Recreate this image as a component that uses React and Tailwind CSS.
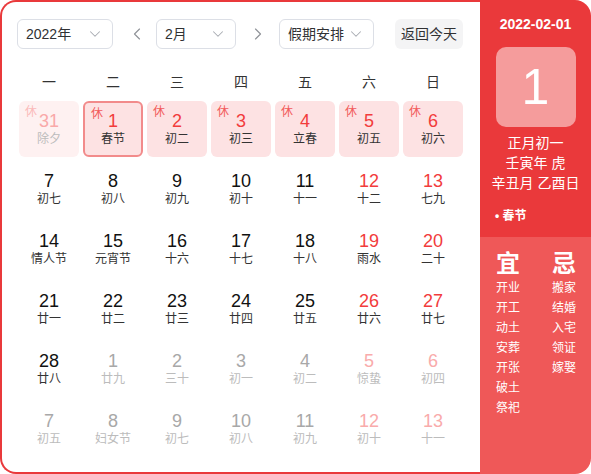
import { ChevronDown, ChevronLeft, ChevronRight } from 'lucide-react'

const font = { fontFamily: '"Liberation Sans", "Noto Sans CJK SC", sans-serif' }

// kind: faded (prev month holiday), hol (holiday), sel (holiday + selected), norm, next
const days = [
  { n: '31', l: '除夕', k: 'faded', rest: true },
  { n: '1', l: '春节', k: 'sel', rest: true },
  { n: '2', l: '初二', k: 'hol', rest: true },
  { n: '3', l: '初三', k: 'hol', rest: true },
  { n: '4', l: '立春', k: 'hol', rest: true },
  { n: '5', l: '初五', k: 'hol', rest: true },
  { n: '6', l: '初六', k: 'hol', rest: true },
  { n: '7', l: '初七' }, { n: '8', l: '初八' }, { n: '9', l: '初九' }, { n: '10', l: '初十' },
  { n: '11', l: '十一' }, { n: '12', l: '十二' }, { n: '13', l: '七九' },
  { n: '14', l: '情人节' }, { n: '15', l: '元宵节' }, { n: '16', l: '十六' }, { n: '17', l: '十七' },
  { n: '18', l: '十八' }, { n: '19', l: '雨水' }, { n: '20', l: '二十' },
  { n: '21', l: '廿一' }, { n: '22', l: '廿二' }, { n: '23', l: '廿三' }, { n: '24', l: '廿四' },
  { n: '25', l: '廿五' }, { n: '26', l: '廿六' }, { n: '27', l: '廿七' },
  { n: '28', l: '廿八' },
  { n: '1', l: '廿九', k: 'next' }, { n: '2', l: '三十', k: 'next' }, { n: '3', l: '初一', k: 'next' },
  { n: '4', l: '初二', k: 'next' }, { n: '5', l: '惊蛰', k: 'next' }, { n: '6', l: '初四', k: 'next' },
  { n: '7', l: '初五', k: 'next' }, { n: '8', l: '妇女节', k: 'next' }, { n: '9', l: '初七', k: 'next' },
  { n: '10', l: '初八', k: 'next' }, { n: '11', l: '初九', k: 'next' }, { n: '12', l: '初十', k: 'next' },
  { n: '13', l: '十一', k: 'next' },
]

const yi = ['开业', '开工', '动土', '安葬', '开张', '破土', '祭祀']
const ji = ['搬家', '结婚', '入宅', '领证', '嫁娶']

function Select({ label, w }) {
  return (
    <div className={`${w} h-[30px] border border-[#dcdfe6] rounded-[6px] flex items-center justify-between pl-[8px] pr-[8px]`}>
      <span className="text-[14px] text-[#303133]">{label}</span>
      <ChevronDown size={18} strokeWidth={1.4} className="text-[#a8abb2]" />
    </div>
  )
}

function Cell({ d, i }) {
  const weekend = i % 7 >= 5
  let box = ''
  let num = 'text-[#111]'
  let lun = 'text-[#333]'
  if (d.k === 'faded') {
    box = 'bg-[#fef1f1]'
    num = 'text-[#f9a9a9]'
    lun = 'text-[#bcbcbc]'
  } else if (d.k === 'hol') {
    box = 'bg-[#fde2e3]'
    num = 'text-[#f23c3c]'
  } else if (d.k === 'sel') {
    box = 'bg-[#fde2e3] border-2 border-[#f28b8b]'
    num = 'text-[#f23c3c]'
  } else if (d.k === 'next') {
    num = weekend ? 'text-[#f9abab]' : 'text-[#a8a8a8]'
    lun = 'text-[#bcbcbc]'
  } else if (weekend) {
    num = 'text-[#f23c3c]'
  }
  return (
    <div className={`relative h-[56px] mx-[2px] rounded-[6px] flex flex-col items-center justify-center ${box}`}>
      {d.rest && (
        <span className={`absolute left-[6px] top-[3px] text-[12px] leading-[16px] ${d.k === 'faded' ? 'text-[#fbbaba]' : 'text-[#f25a5a]'}`}>休</span>
      )}
      <span className={`text-[18px] leading-[20px] ${num}`}>{d.n}</span>
      <span className={`text-[12px] leading-[16px] ${lun}`}>{d.l}</span>
    </div>
  )
}

export default function App() {
  return (
    <div className="w-[591px] h-[474px] flex bg-white" style={font}>
      {/* left calendar */}
      <div className="w-[480px] h-full border-2 border-r-0 border-[#e9393b] rounded-l-[16px] pt-[17px] pl-[15px]">
        <div className="flex items-center">
          <Select label="2022年" w="w-[96px]" />
          <div className="w-[43px] flex justify-center pl-[4px] text-[#909399]">
            <ChevronLeft size={20} strokeWidth={1.4} />
          </div>
          <Select label="2月" w="w-[80px]" />
          <div className="w-[43px] flex justify-center text-[#909399]">
            <ChevronRight size={20} strokeWidth={1.4} />
          </div>
          <Select label="假期安排" w="w-[95px]" />
          <div className="ml-[21px] w-[68px] h-[30px] rounded-[6px] bg-[#f4f4f5] flex items-center justify-center text-[14px] text-[#303133]">
            返回今天
          </div>
        </div>

        <div className="w-[448px] grid grid-cols-7 mt-[23px] text-[14px] leading-[20px] text-[#333]">
          {['一', '二', '三', '四', '五', '六', '日'].map(w => (
            <div key={w} className="text-center">{w}</div>
          ))}
        </div>

        <div className="w-[448px] grid grid-cols-7 gap-y-[4px] mt-[9px]">
          {days.map((d, i) => <Cell key={i} d={d} i={i} />)}
        </div>
      </div>

      {/* right panel */}
      <div className="w-[111px] h-full rounded-r-[16px] overflow-hidden flex flex-col text-white">
        <div className="bg-[#ea393b] h-[237px] pt-[14px] flex flex-col items-center">
          <div className="text-[14px] leading-[20px] font-bold">2022-02-01</div>
          <div className="mt-[13px] w-[80px] h-[80px] rounded-[10px] bg-[#f59c9c] flex items-center justify-center text-[50px] leading-none">
            1
          </div>
          <div className="mt-[6px] text-[14px] leading-[20px] text-center">
            <div>正月初一</div>
            <div>壬寅年 虎</div>
            <div>辛丑月 乙酉日</div>
          </div>
          <div className="self-start pl-[15px] mt-[15px] text-[12px] leading-[16px] font-bold">• 春节</div>
        </div>
        <div className="flex-1 bg-[#ef5858] pt-[13px] pl-[16px] flex">
          <div className="w-[56px]">
            <div className="text-[24px] leading-[28px] font-bold">宜</div>
            {yi.map(t => <div key={t} className="text-[12px] leading-[20px]">{t}</div>)}
          </div>
          <div>
            <div className="text-[24px] leading-[28px] font-bold">忌</div>
            {ji.map(t => <div key={t} className="text-[12px] leading-[20px]">{t}</div>)}
          </div>
        </div>
      </div>
    </div>
  )
}
